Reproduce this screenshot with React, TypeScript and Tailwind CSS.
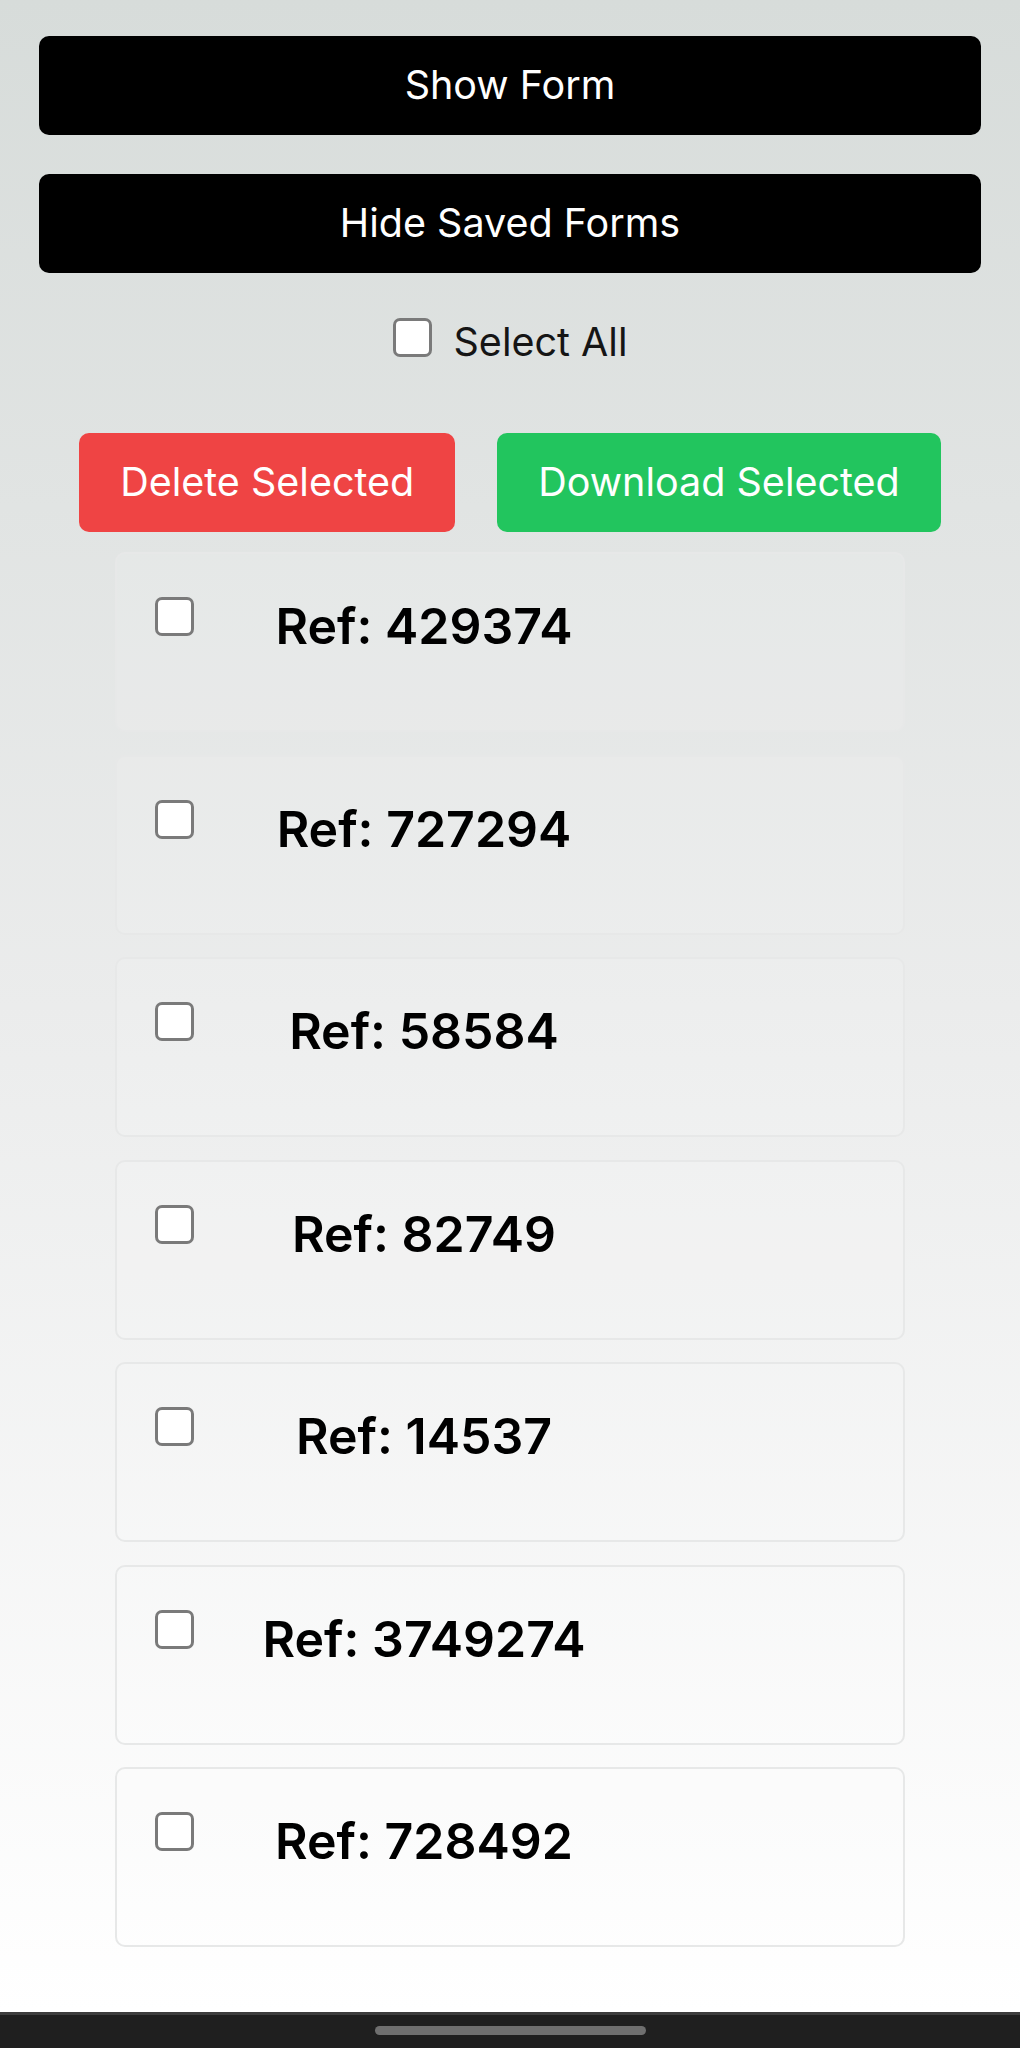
const refs = ["429374", "727294", "58584", "82749", "14537", "3749274", "728492"];

function Box() {
  return (
    <span className="block h-[39px] w-[39px] shrink-0 rounded-[7px] border-[3px] border-[#7a7a7a] bg-white" />
  );
}

export default function App() {
  return (
    <div className="flex h-[2048px] w-full flex-col overflow-hidden font-['Inter',sans-serif]">
      <main className="flex-1 bg-gradient-to-b from-[#d7dcda] via-[#ebecec] to-white px-[39px] pt-[36px]">
        <button className="flex h-[99px] w-full items-center justify-center rounded-[10px] bg-black text-[39.5px] text-white">
          Show Form
        </button>
        <button className="mt-[39px] flex h-[99px] w-full items-center justify-center rounded-[10px] bg-black text-[39.5px] text-white">
          Hide Saved Forms
        </button>

        <label className="mt-[45px] flex h-[39px] items-center justify-center gap-[22px]">
          <Box />
          <span className="translate-y-[5px] text-[39.5px] leading-none text-[#151515]">Select All</span>
        </label>

        <div className="mt-[76px] flex justify-center gap-[42px]">
          <button className="h-[99px] rounded-[10px] bg-[#ef4444] px-[41px] text-[39.5px] text-white">
            Delete Selected
          </button>
          <button className="h-[99px] rounded-[10px] bg-[#22c55e] px-[41px] text-[39.5px] text-white">
            Download Selected
          </button>
        </div>

        <ul className="mx-auto mt-[20px] flex w-[790px] flex-col gap-[22.5px]">
          {refs.map((r) => (
            <li
              key={r}
              className="flex h-[180px] items-start rounded-[10px] border-2 border-[#e7e8e8] bg-white/10 px-[38px] pt-[42px]"
            >
              <span className="mt-px">
                <Box />
              </span>
              <p className="w-[460px] text-center text-[50px] font-semibold leading-[60px] text-black">
                Ref: {r}
              </p>
            </li>
          ))}
        </ul>
      </main>

      <div className="flex h-[36px] items-start justify-center border-t-[3px] border-[#3d3d3d] bg-[#1f1f1f] pt-[11px]">
        <span className="h-[9px] w-[271px] rounded-full bg-[#6f6f6f]" />
      </div>
    </div>
  );
}
